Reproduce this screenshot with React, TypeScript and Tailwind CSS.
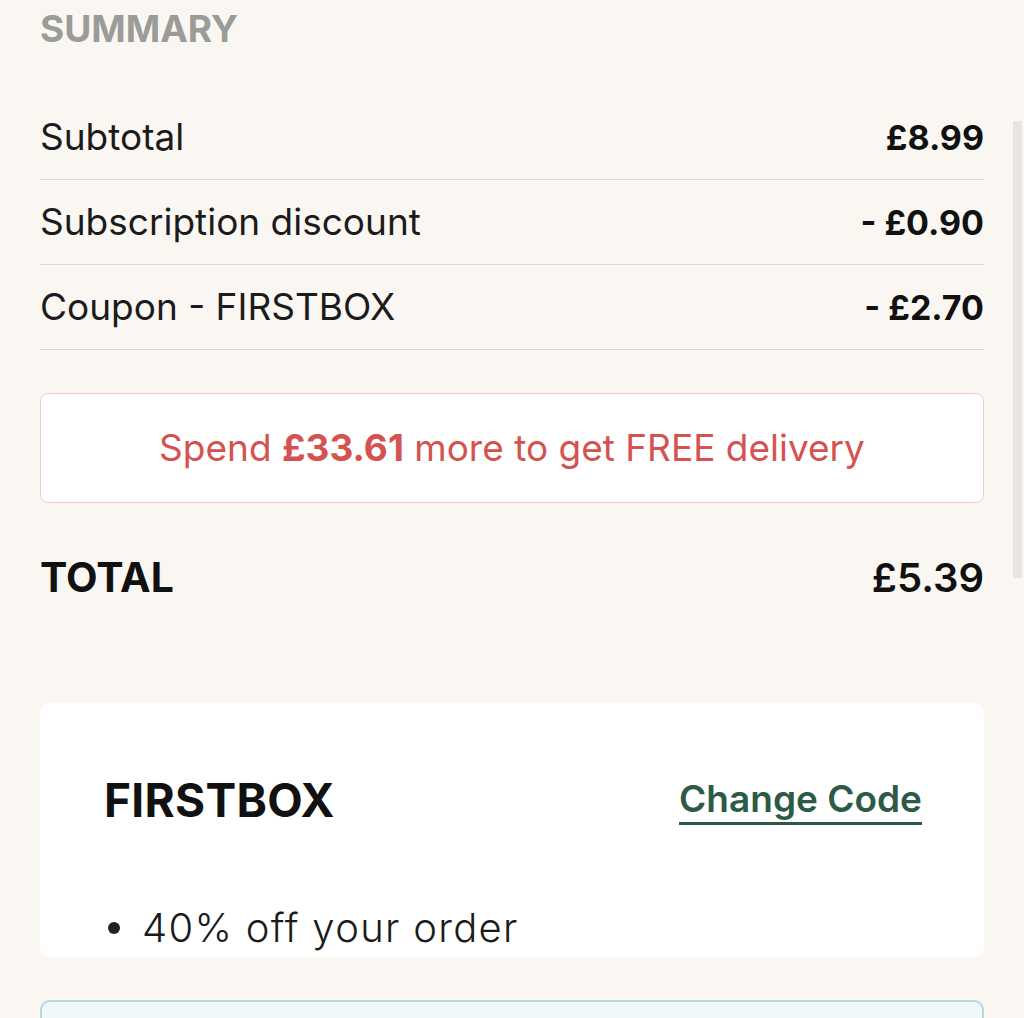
import React from "react";

const font = { fontFamily: "Inter, 'Noto Sans', sans-serif" };

function Row({ label, value }: { label: string; value: string }) {
  return (
    <div className="flex h-[85px] items-center justify-between border-b border-[#dcd9d5]">
      <span className="text-[37px] text-[#1b1b1b]">{label}</span>
      <span className="text-[34px] font-bold text-[#111]">{value}</span>
    </div>
  );
}

export default function App() {
  return (
    <div style={font} className="relative h-[1018px] w-[1024px] overflow-hidden bg-[#faf7f3]">
      <div className="px-[40px]">
        <div className="h-[95px] pt-[7px]">
          <h2 className="text-[37px] font-bold leading-[44px] text-[#9b9b97]">SUMMARY</h2>
        </div>
        <Row label="Subtotal" value="£8.99" />
        <Row label="Subscription discount" value="- £0.90" />
        <Row label="Coupon - FIRSTBOX" value="- £2.70" />
        <div className="mt-[43px] flex h-[110px] items-center justify-center rounded-[8px] border border-[#eecac8] bg-white">
          <p className="text-[37px] text-[#d4524f]">
            Spend <span className="font-bold">£33.61</span> more to get FREE delivery
          </p>
        </div>
        <div className="mt-[40px] flex h-[70px] items-center justify-between">
          <span className="text-[41px] font-bold text-[#111]">TOTAL</span>
          <span className="text-[40px] font-semibold text-[#111]">£5.39</span>
        </div>
        <div className="mt-[90px] h-[254px] overflow-hidden rounded-[10px] bg-white pl-[68px] pr-[62px]">
          <div className="flex h-[194px] items-center justify-between">
            <span className="-ml-[4px] text-[46px] font-bold tracking-[0.3px] text-[#111]">FIRSTBOX</span>
            <span className="border-b-[3px] border-[#2d5a45] text-[37px] font-semibold leading-[46px] text-[#2d5a45]">
              Change Code
            </span>
          </div>
          <div className="mt-[6px] flex items-center gap-[22px] text-[40px] font-light leading-[50px] tracking-[1.3px] text-[#1b1b1b]">
            <span className="h-[12px] w-[12px] rounded-full bg-[#222]" />
            <span>40% off your order</span>
          </div>
        </div>
        <div className="mt-[43px] h-[40px] rounded-t-[10px] border-2 border-[#b7d6de] bg-[#eef7fa]" />
      </div>
      <div className="absolute left-[1013px] top-[121px] h-[457px] w-[9px] bg-[#e7e4e1]" />
    </div>
  );
}
